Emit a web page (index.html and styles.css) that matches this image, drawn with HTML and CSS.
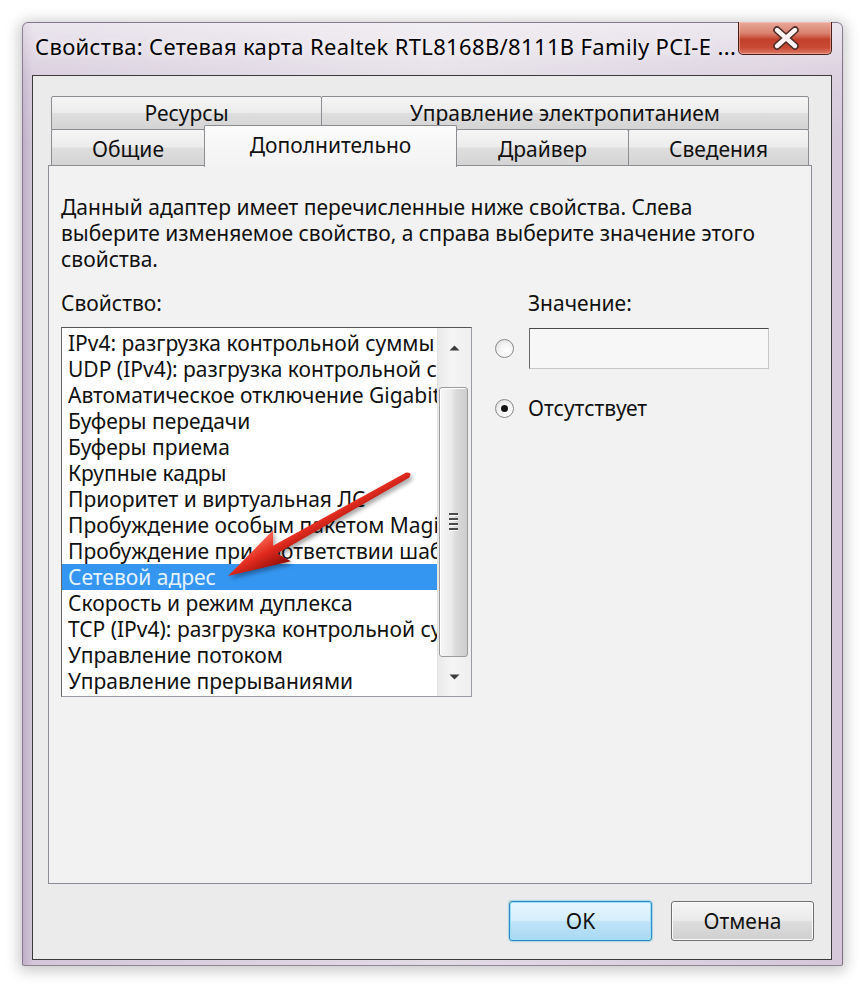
FILE: index.html
```html
<!DOCTYPE html>
<html lang="ru">
<head>
<meta charset="utf-8">
<title>Свойства: Сетевая карта Realtek</title>
<link rel="stylesheet" href="styles.css">
</head>
<body>
<div class="window">
  <div class="titlebar">
    <div class="title">Свойства: Сетевая карта Realtek RTL8168B/8111B Family PCI-E ...</div>
    <div class="close">
      <svg width="94" height="33" viewBox="0 0 94 33">
        <path d="M38 8 L56 24 M56 8 L38 24" stroke="#4a2a26" stroke-width="7.5" stroke-linecap="round"/>
        <path d="M38 8 L56 24 M56 8 L38 24" stroke="#fbf4f2" stroke-width="4.4" stroke-linecap="round"/>
      </svg>
    </div>
  </div>
  <div class="client">
    <div class="tabs">
      <div class="tabrow back">
        <div class="tab t-res">Ресурсы</div>
        <div class="tab t-pow">Управление электропитанием</div>
      </div>
      <div class="tabrow front">
        <div class="tab t-gen">Общие</div>
        <div class="tab t-adv sel">Дополнительно</div>
        <div class="tab t-drv">Драйвер</div>
        <div class="tab t-inf">Сведения</div>
      </div>
    </div>
    <div class="panel">
      <p class="desc">Данный адаптер имеет перечисленные ниже свойства. Слева<br>выберите изменяемое свойство, а справа выберите значение этого<br>свойства.</p>
      <div class="fields">
        <div class="col-left">
          <div class="label">Свойство:</div>
          <div class="listbox">
            <ul class="items">
              <li>IPv4: разгрузка контрольной суммы</li>
              <li>UDP (IPv4): разгрузка контрольной суммы</li>
              <li>Автоматическое отключение Gigabit</li>
              <li>Буферы передачи</li>
              <li>Буферы приема</li>
              <li>Крупные кадры</li>
              <li>Приоритет и виртуальная ЛС</li>
              <li>Пробуждение особым пакетом Magic Packet</li>
              <li>Пробуждение при соответствии шаблону</li>
              <li class="selected">Сетевой адрес</li>
              <li>Скорость и режим дуплекса</li>
              <li>TCP (IPv4): разгрузка контрольной суммы</li>
              <li>Управление потоком</li>
              <li>Управление прерываниями</li>
            </ul>
            <div class="scrollbar">
              <div class="sb-btn up">
                <svg width="11" height="6" viewBox="0 0 11 6"><path d="M0.5 5.5 L5.5 0.5 L10.5 5.5 Z" fill="#3c3c3c"/></svg>
              </div>
              <div class="sb-track">
                <div class="thumb">
                  <span class="grip"></span><span class="grip"></span><span class="grip"></span><span class="grip"></span>
                </div>
              </div>
              <div class="sb-btn down">
                <svg width="11" height="6" viewBox="0 0 11 6"><path d="M0.5 0.5 L10.5 0.5 L5.5 5.5 Z" fill="#3c3c3c"/></svg>
              </div>
            </div>
          </div>
        </div>
        <div class="col-right">
          <div class="label value-label">Значение:</div>
          <div class="radio-row first">
            <span class="radio"></span>
            <div class="textbox"></div>
          </div>
          <div class="radio-row second">
            <span class="radio checked"></span>
            <span class="radio-text">Отсутствует</span>
          </div>
        </div>
      </div>
    </div>
    <div class="buttons">
      <button class="btn default">OK</button>
      <button class="btn">Отмена</button>
    </div>
  </div>
</div>
<svg class="arrow" width="864" height="990" viewBox="0 0 864 990">
  <defs>
    <linearGradient id="arrowGrad" gradientUnits="userSpaceOnUse" x1="0" y1="-18" x2="0" y2="18">
      <stop offset="0" stop-color="#ff6a55"/>
      <stop offset="0.45" stop-color="#e02a1e"/>
      <stop offset="1" stop-color="#8e0c08"/>
    </linearGradient>
  </defs>
  <g transform="translate(228 576) rotate(-29.3)">
    <path d="M0 0 L62 -18 L54 -4.4 L206 -3 Q212 0 206 3 L54 4.4 L62 18 Z" fill="url(#arrowGrad)"/>
  </g>
</svg>
</body>
</html>
```

FILE: styles.css
```css
* {
  box-sizing: border-box;
}

html,
body {
  margin: 0;
  padding: 0;
}

body {
  position: relative;
  width: 864px;
  height: 990px;
  overflow: hidden;
  background: #ffffff;
  font-family: "Noto Sans", "Open Sans", sans-serif;
  font-size: 21px;
  color: #111111;
}

/* window frame */
.window {
  margin: 22px 0 0 22px;
  width: 821px;
  height: 944px;
  padding: 0 10px 5px 9px;
  display: flex;
  flex-direction: column;
  border: 1px solid rgba(80, 66, 88, 0.6);
  border-radius: 6px 6px 2px 2px;
  background:
    linear-gradient(to bottom, rgba(255, 255, 255, 0.55) 0, rgba(255, 255, 255, 0.15) 55px, rgba(255, 255, 255, 0) 120px),
    linear-gradient(to right, #c0afc8 0, #d3c7d9 10px, #e2dce5 50%, #d4c8d9 100%);
  box-shadow: 0 2px 14px 3px rgba(0, 0, 0, 0.22);
}

.titlebar {
  height: 52px;
  display: flex;
  align-items: flex-start;
  padding-left: 3px;
}

.title {
  flex: 1;
  padding-top: 9px;
  line-height: 28px;
  font-size: 22px;
  letter-spacing: 0.35px;
  white-space: nowrap;
  overflow: hidden;
  color: #000;
  text-shadow: 0 0 8px rgba(255, 255, 255, 0.9);
}

.close {
  margin-top: -1px;
  width: 94px;
  height: 33px;
  flex: none;
  border: 1px solid #4b1d17;
  border-top: none;
  border-radius: 0 0 5px 5px;
  background: linear-gradient(to bottom, #e9a99a 0, #d9826f 35%, #c2402a 55%, #c84a35 80%, #dd7a66 100%);
  box-shadow: inset 0 0 0 1px rgba(255, 210, 200, 0.45);
}

.close svg {
  display: block;
}

/* client area */
.client {
  flex: 1;
  display: flex;
  flex-direction: column;
  border: 1px solid #3a3a3a;
  background: #ebebeb;
  padding: 20px 19px 0 15px;
}

.tabs {
  margin-left: 3px;
  width: 758px;
  position: relative;
  z-index: 2;
}

.tabrow {
  display: flex;
  align-items: flex-start;
}

.tabrow.back {
  height: 34px;
}

.tabrow.front {
  height: 37px;
  margin-top: -1px;
}

.tab {
  height: 100%;
  margin-right: -1px;
  display: flex;
  align-items: center;
  justify-content: center;
  border: 1px solid #8b8d93;
  border-radius: 2px 2px 0 0;
  background: linear-gradient(to bottom, #f5f5f5 0, #ececec 48%, #dedede 52%, #d4d4d4 100%);
  white-space: nowrap;
}

.tabrow.front .tab {
  padding-top: 3px;
}

.tab:last-child {
  margin-right: 0;
}

.t-res { width: 271px; }
.t-pow { width: 488px; }
.t-gen { width: 154px; }
.t-adv { width: 253px; }
.t-drv { width: 173px; }
.t-inf { width: 181px; }

.tabrow.front .tab.sel {
  height: 42px;
  margin-top: -4px;
  border-bottom: none;
  background: linear-gradient(to bottom, #fbfbfb 0, #f3f3f3 100%);
  position: relative;
  z-index: 3;
  padding-top: 0;
  padding-bottom: 3px;
}

.panel {
  margin-top: -1px;
  height: 719px;
  border: 1px solid #898c95;
  background: #f2f2f2;
  padding: 28px 12px 0 12px;
  position: relative;
  z-index: 1;
}

.desc {
  margin: 0;
  line-height: 26px;
  white-space: nowrap;
}

.fields {
  margin-top: 18px;
  display: grid;
  grid-template-columns: 411px 1fr;
  column-gap: 23px;
}

.label {
  line-height: 26px;
}

.listbox {
  margin-top: 11px;
  width: 411px;
  height: 370px;
  display: flex;
  border: 1px solid #9a9ca3;
  border-top-color: #555555;
  border-left-color: #666666;
  background: #ffffff;
}

.items {
  flex: 1;
  min-width: 0;
  margin: 0;
  padding: 2px 0 0 0;
  list-style: none;
  overflow: hidden;
}

.items li {
  height: 26px;
  line-height: 26px;
  padding-left: 6px;
  white-space: nowrap;
  overflow: hidden;
}

.items li.selected {
  background: #3596f2;
  color: #e4f3ff;
}

.scrollbar {
  width: 34px;
  display: flex;
  flex-direction: column;
  border-left: 1px solid #e3e3e3;
  background: linear-gradient(to right, #e9e9e9 0, #f5f5f5 40%, #efefef 100%);
}

.sb-btn {
  height: 29px;
  display: flex;
  justify-content: center;
}

.sb-btn.up {
  align-items: flex-start;
  padding-top: 17px;
}

.sb-btn.down {
  align-items: flex-start;
  padding-top: 7px;
}

.sb-btn svg {
  display: block;
}

.sb-track {
  flex: 1;
  padding: 30px 0 0 1px;
}

.thumb {
  width: 29px;
  height: 270px;
  border: 1px solid #9c9c9c;
  border-radius: 3px;
  background: linear-gradient(to right, #f6f6f6 0, #ececec 40%, #dadada 60%, #cdcdcd 100%);
  box-shadow: inset 1px 1px 0 #ffffff;
  display: flex;
  flex-direction: column;
  align-items: center;
  justify-content: center;
  gap: 2px;
}

.grip {
  width: 9px;
  height: 2px;
  background: #4a4a4a;
  border-bottom: 1px solid #ffffff;
  box-sizing: content-box;
}

.value-label {
  padding-left: 33px;
}

.radio-row {
  display: flex;
  align-items: center;
}

.radio-row.first {
  margin-top: 12px;
}

.radio-row.second {
  margin-top: 26px;
  line-height: 26px;
}

.radio {
  width: 19px;
  height: 19px;
  flex: none;
  border-radius: 50%;
  border: 1px solid #8a8a8a;
  background: radial-gradient(circle at 60% 65%, #ffffff 0, #f4f4f4 45%, #d8d8d8 100%);
  display: flex;
  align-items: center;
  justify-content: center;
}

.radio.checked::after {
  content: "";
  width: 7px;
  height: 7px;
  border-radius: 50%;
  background: #151515;
}

.textbox {
  margin-left: 15px;
  width: 240px;
  height: 41px;
  border: 1px solid #c6c6c6;
  border-top-color: #4a4a4a;
  border-left-color: #6a6a6a;
  background: #f7f7f7;
}

.radio-text {
  margin-left: 14px;
}

/* dialog buttons */
.buttons {
  margin-top: 17px;
  margin-right: -2px;
  display: flex;
  justify-content: flex-end;
  gap: 19px;
}

.btn {
  width: 143px;
  height: 40px;
  padding: 0;
  font-family: inherit;
  font-size: 21px;
  color: #111111;
  border: 1px solid #707070;
  border-radius: 3px;
  background: linear-gradient(to bottom, #f4f4f4 0, #ebebeb 48%, #dddddd 52%, #cfcfcf 100%);
  box-shadow: inset 0 0 0 1px #fbfbfb;
}

.btn.default {
  border-color: #2c8ac4;
  background: linear-gradient(to bottom, #e7f5fd 0, #d5eefb 48%, #bfe3f8 52%, #a9d8f3 100%);
  box-shadow: inset 0 0 0 1px #9be0fb, 0 0 1px 1px rgba(60, 170, 220, 0.35);
}

/* annotation arrow */
.arrow {
  position: absolute;
  left: 0;
  top: 0;
  z-index: 10;
  pointer-events: none;
  filter: drop-shadow(2px 3px 2px rgba(0, 0, 0, 0.35));
}
```
